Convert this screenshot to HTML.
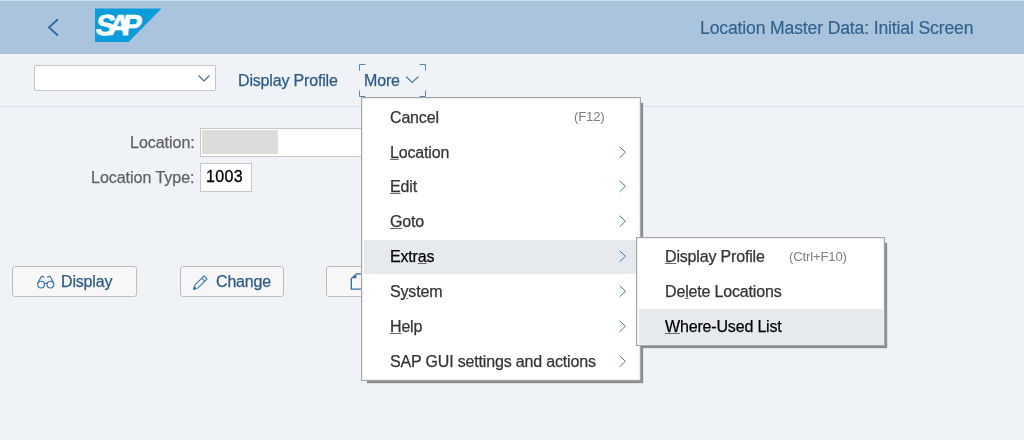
<!DOCTYPE html>
<html><head><meta charset="utf-8">
<style>
*{box-sizing:border-box;margin:0;padding:0}
html,body{width:1024px;height:440px;overflow:hidden}
body{background:#eff3f8;font-family:"Liberation Sans",sans-serif;position:relative}
.abs{position:absolute;white-space:nowrap}
.t{will-change:transform}
#hdr{position:absolute;left:0;top:0;width:1024px;height:54px;background:#aac4dd;border-top:1px solid #cddcea;border-bottom:1px solid #a6c0d9}
#title{left:700px;top:18px;font-size:17.6px;line-height:20px;color:#30628f;letter-spacing:-0.15px;-webkit-text-stroke:0.15px currentColor}
#sep{position:absolute;left:0;top:106px;width:1024px;height:1px;background:#d6e2ee}
.lnk{font-size:16px;line-height:18px;color:#2b5b87;letter-spacing:-0.17px;-webkit-text-stroke:0.25px currentColor}
#combo{left:34px;top:65px;width:182px;height:26px;background:#fff;border:1px solid #c5c5c5;border-radius:1px}
.lbl{font-size:16px;line-height:18px;color:#616161;letter-spacing:-0.02px;-webkit-text-stroke:0.25px currentColor}
.fld{background:#fff;border:1px solid #c8c8c8}
.btn{position:absolute;top:266px;height:31px;background:#f7f7f7;border:1px solid #bdbdbd;border-radius:3px}
.btxt{font-size:16px;line-height:18px;color:#2b5b87;letter-spacing:-0.17px;-webkit-text-stroke:0.25px currentColor}
.menu{position:absolute;background:#fff;border:1px solid #a6a6a6;box-shadow:4px 4px 1px -2px #8a8d91, inset 1px 1px 1px #ececec, inset -1px -1px 1px #ececec}
.mi{position:absolute;left:0;right:0;height:35px}
.mi.hl .bg{position:absolute;left:2px;right:2px;top:0;height:34px;background:#e6eaee}
.mt{position:absolute;left:28px;top:9px;font-size:16px;line-height:18px;color:#333;white-space:nowrap;letter-spacing:-0.17px;will-change:transform;-webkit-text-stroke:0.25px currentColor}
.sc{position:absolute;font-size:13.2px;line-height:18px;color:#7e7e7e;top:8px;will-change:transform;letter-spacing:-0.2px}
.chev{position:absolute;left:255px;top:10px}
.sub .mt{top:9px}
.sub .hl .bg{height:35px;right:1px}
.sub .sc{top:9px}
u{text-decoration:underline;text-underline-offset:1px;text-decoration-thickness:1px;text-decoration-color:#6a6a6a}
</style></head>
<body>
<div id="hdr"></div>
<!-- back chevron -->
<svg class="abs" style="left:44px;top:16px" width="20" height="24" viewBox="0 0 20 24"><path d="M13.4 3.7 L4.9 11.4 L13.4 19" fill="none" stroke="#2b67a0" stroke-width="1.85" stroke-linecap="round" stroke-linejoin="round"/></svg>
<!-- SAP logo -->
<svg class="abs" style="left:95px;top:8px" width="67" height="35" viewBox="0 0 67 35">
<polygon points="0,0.5 66.5,0.5 33.5,34 0,34" fill="#0a9ddb"/>
<g transform="translate(0,27) skewX(-8) translate(0,-27)" font-family="Liberation Sans" font-weight="bold" font-size="29" fill="#fff" stroke="#fff" stroke-width="0.7"><text x="-0.2" y="27">S</text><text x="12.5" y="27">A</text><text x="26.3" y="27">P</text></g>
</svg>
<div class="abs t" id="title">Location Master Data: Initial Screen</div>

<div id="sep"></div>
<div class="abs fld" id="combo"></div>
<svg class="abs" style="left:197px;top:73px" width="14" height="10" viewBox="0 0 14 10"><path d="M1.5 2.5 L7 8 L12.5 2.5" fill="none" stroke="#4d6680" stroke-width="1.1"/></svg>
<div class="abs lnk t" style="left:238px;top:72px">Display Profile</div>
<!-- focus corners -->
<svg class="abs" style="left:359px;top:64px" width="68" height="34" viewBox="0 0 68 34">
<path d="M0.5 6.5 V0.5 H6.5 M60.5 0.5 H66.5 V6.5 M66.5 26.5 V32.5 H60.5 M6.5 32.5 H0.5 V26.5" fill="none" stroke="#5a86ae" stroke-width="1"/>
</svg>
<div class="abs lnk t" style="left:364px;top:72px">More</div>
<svg class="abs" style="left:405px;top:75px" width="15" height="10" viewBox="0 0 15 10"><path d="M1 1.5 L7.2 7.5 L13.5 1.5" fill="none" stroke="#4a7aa6" stroke-width="1.1"/></svg>

<div class="abs lbl t" style="left:129.5px;top:134px">Location:</div>
<div class="abs fld" style="left:200px;top:128px;width:200px;height:29px"><div style="position:absolute;left:1px;top:1px;width:76px;height:24px;background:#dddcdb"></div></div>
<div class="abs lbl t" style="left:90.5px;top:169px">Location Type:</div>
<div class="abs fld" style="left:200px;top:163px;width:52px;height:29px"></div>
<div class="abs t" style="left:205.5px;top:168px;font-size:16px;line-height:18px;color:#000;letter-spacing:0.35px;-webkit-text-stroke:0.3px #000">1003</div>

<div class="btn" style="left:12px;width:125px"></div>
<svg class="abs" style="left:34px;top:272px" width="24" height="20" viewBox="34 272 24 20">
<g fill="none" stroke="#3672a8" stroke-width="1.15" stroke-linecap="round">
<circle cx="41.1" cy="284.6" r="3.4"/><circle cx="50.4" cy="284.6" r="3.4"/>
<path d="M44.4 283.6 Q45.75 282.6 47.1 283.6"/>
<path d="M37.9 283.2 L41.2 276.6 Q42.6 275.9 43.9 277.2"/>
<path d="M53.6 283.2 L50.3 276.6 Q48.9 275.9 47.6 277.2"/>
</g></svg>
<div class="abs btxt t" style="left:61px;top:273px">Display</div>
<div class="btn" style="left:180px;width:104px"></div>
<svg class="abs" style="left:188px;top:270px" width="24" height="24" viewBox="188 270 24 24">
<g transform="translate(193.7,289.2) rotate(-45)" fill="none" stroke="#3170a8" stroke-width="1" stroke-linejoin="round">
<path d="M0 0 L4 -2.1 L16.8 -2.1 L16.8 2.1 L4 2.1 Z"/>
<path d="M13.4 -2.1 V2.1"/>
<path d="M0 0 L2.2 -1.2 L2.2 1.2 Z" fill="#2f6aa0"/>
</g></svg>
<div class="abs btxt t" style="left:216px;top:273px">Change</div>
<div class="btn" style="left:326px;width:104px"></div>
<svg class="abs" style="left:344px;top:268px" width="20" height="24" viewBox="344 268 20 24">
<path d="M351.3 278 V289.2 H362 M356 273.8 H362" fill="none" stroke="#2f6aa0" stroke-width="1.3"/>
<path d="M350.8 278.3 L356.3 273.2 L356.3 278.3 Z" fill="#2f6aa0"/>
</svg>

<!-- main menu -->
<div class="menu" style="left:361px;top:97px;width:280px;height:284px">
  <div class="mi" style="top:2px"><div class="mt">Cancel</div><div class="sc" style="left:212px">(F12)</div></div>
  <div class="mi" style="top:37px"><div class="mt"><u>L</u>ocation</div><svg class="chev" width="12" height="14" viewBox="0 0 12 14"><path d="M2.6 1.8 L8.4 7.2 L2.6 12.8" fill="none" stroke="#3b78ad" stroke-width="1"/></svg></div>
  <div class="mi" style="top:71px"><div class="mt"><u>E</u>dit</div><svg class="chev" width="12" height="14" viewBox="0 0 12 14"><path d="M2.6 1.8 L8.4 7.2 L2.6 12.8" fill="none" stroke="#3b78ad" stroke-width="1"/></svg></div>
  <div class="mi" style="top:106px"><div class="mt"><u>G</u>oto</div><svg class="chev" width="12" height="14" viewBox="0 0 12 14"><path d="M2.6 1.8 L8.4 7.2 L2.6 12.8" fill="none" stroke="#3b78ad" stroke-width="1"/></svg></div>
  <div class="mi hl" style="top:142px"><div class="bg"></div><div class="mt" style="color:#000;top:8px"><span>Extr<u>a</u>s</span></div><svg class="chev" style="top:9px" width="12" height="14" viewBox="0 0 12 14"><path d="M2.6 1.8 L8.4 7.2 L2.6 12.8" fill="none" stroke="#3b78ad" stroke-width="1"/></svg></div>
  <div class="mi" style="top:176px"><div class="mt">S<u>y</u>stem</div><svg class="chev" width="12" height="14" viewBox="0 0 12 14"><path d="M2.6 1.8 L8.4 7.2 L2.6 12.8" fill="none" stroke="#3b78ad" stroke-width="1"/></svg></div>
  <div class="mi" style="top:211px"><div class="mt"><u>H</u>elp</div><svg class="chev" width="12" height="14" viewBox="0 0 12 14"><path d="M2.6 1.8 L8.4 7.2 L2.6 12.8" fill="none" stroke="#3b78ad" stroke-width="1"/></svg></div>
  <div class="mi" style="top:246px"><div class="mt">SAP GUI settings and actions</div><svg class="chev" width="12" height="14" viewBox="0 0 12 14"><path d="M2.6 1.8 L8.4 7.2 L2.6 12.8" fill="none" stroke="#3b78ad" stroke-width="1"/></svg></div>
</div>
<!-- sub menu -->
<div class="menu sub" style="left:636px;top:237px;width:249px;height:109px">
  <div class="mi" style="top:1px"><div class="mt"><u>D</u>isplay Profile</div><div class="sc" style="left:152px">(Ctrl+F10)</div></div>
  <div class="mi" style="top:36px"><div class="mt">De<u>l</u>ete Locations</div></div>
  <div class="mi hl" style="top:71px"><div class="bg"></div><div class="mt" style="color:#000"><u>W</u>here-Used List</div></div>
</div>
</body></html>
